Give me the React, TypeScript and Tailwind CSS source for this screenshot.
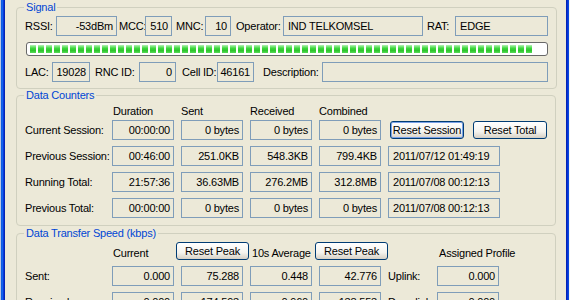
import type { ReactNode } from "react";

const SEGMENTS = Array.from({ length: 63 }, (_, i) => i);

function Box({
  w,
  children,
  align = "right",
}: {
  w: string;
  children?: ReactNode;
  align?: "left" | "right";
}) {
  return (
    <div
      className={`flex h-[20px] shrink-0 items-center border border-[#7F9DB9] bg-[#ECE9D8] ${w} ${
        align === "right" ? "justify-end pr-[3px]" : "justify-start pl-[4px]"
      }`}
    >
      {children}
    </div>
  );
}

function Label({ w, children, pl = "" }: { w: string; children: ReactNode; pl?: string }) {
  return <span className={`shrink-0 whitespace-nowrap ${w} ${pl}`}>{children}</span>;
}

function XpButton({ children, w, focused = false }: { children: ReactNode; w: string; focused?: boolean }) {
  return (
    <button
      type="button"
      className={`flex h-[18px] shrink-0 items-center justify-center rounded-[3px] border border-[#003C74] bg-[linear-gradient(to_bottom,#FFFFFF,#F4F3EE_60%,#D6D0C5)] text-[11px] leading-[13px] text-black ${w} ${
        focused ? "shadow-[inset_0_0_0_1px_#7BA2E7]" : ""
      }`}
    >
      {children}
    </button>
  );
}

function Group({ title, children, className = "" }: { title: string; children: ReactNode; className?: string }) {
  return (
    <fieldset className={`w-[540px] rounded-[4px] border border-[#D0D0BF] px-[8px] ${className}`}>
      <legend className="-ml-px px-[2px] leading-[13px] text-[#0046D5]">{title}</legend>
      {children}
    </fieldset>
  );
}

function SignalGroup() {
  return (
    <Group title="Signal" className="pb-[6px]">
      <div className="flex flex-col pt-[2px]">
        <div className="flex h-[20px] items-center">
          <Label w="w-[31px]">RSSI:</Label>
          <Box w="w-[61px]">-53dBm</Box>
          <Label w="w-[28px]" pl="pl-[2px]">MCC:</Label>
          <Box w="w-[27px]">510</Box>
          <Label w="w-[33px]" pl="pl-[4px]">MNC:</Label>
          <Box w="w-[26px]">10</Box>
          <Label w="w-[52px]" pl="pl-[5px]">Operator:</Label>
          <Box w="w-[140px]" align="left">IND TELKOMSEL</Box>
          <Label w="w-[32px]" pl="pl-[4px]">RAT:</Label>
          <Box w="w-[93px]" align="left">EDGE</Box>
        </div>

        <div className="ml-px mt-[6px] flex h-[14px] w-[522px] items-center gap-[2px] rounded-[3px] border border-[#686868] bg-white pl-[3px]">
          {SEGMENTS.map((i) => (
            <div
              key={i}
              className="h-[8px] w-[6px] shrink-0 bg-[linear-gradient(to_bottom,#B7F2B7,#3FD83F_40%,#2CC52C_70%,#5ADB5A)]"
            />
          ))}
        </div>

        <div className="mt-[6px] flex h-[20px] items-center">
          <Label w="w-[27px]">LAC:</Label>
          <Box w="w-[38px]">19028</Box>
          <Label w="w-[49px]" pl="pl-[5px]">RNC ID:</Label>
          <Box w="w-[37px]">0</Box>
          <Label w="w-[41px]" pl="pl-[6px]">Cell ID:</Label>
          <Box w="w-[37px]">46161</Box>
          <Label w="w-[68px]" pl="pl-[9px]">Description:</Label>
          <Box w="w-[226px]" />
        </div>
      </div>
    </Group>
  );
}

const counterRows = [
  { label: "Current Session:", values: ["00:00:00", "0 bytes", "0 bytes", "0 bytes"], buttons: true },
  { label: "Previous Session:", values: ["00:46:00", "251.0KB", "548.3KB", "799.4KB"], stamp: "2011/07/12 01:49:19" },
  { label: "Running Total:", values: ["21:57:36", "36.63MB", "276.2MB", "312.8MB"], stamp: "2011/07/08 00:12:13" },
  { label: "Previous Total:", values: ["00:00:00", "0 bytes", "0 bytes", "0 bytes"], stamp: "2011/07/08 00:12:13" },
];

function CountersGroup() {
  return (
    <Group title="Data Counters" className="pb-[7px]">
      <div className="flex h-[18px] items-center">
        <span className="w-[87px] shrink-0" />
        <span className="w-[69px] shrink-0 pl-px">Duration</span>
        <span className="w-[69px] shrink-0">Sent</span>
        <span className="w-[69px] shrink-0">Received</span>
        <span className="w-[62px] shrink-0">Combined</span>
      </div>
      <div className="flex flex-col gap-[6px]">
        {counterRows.map((r) => (
          <div key={r.label} className="flex h-[20px] items-center">
            <Label w="w-[87px]">{r.label}</Label>
            <div className="flex gap-[7px]">
              {r.values.map((v, i) => (
                <Box key={i} w="w-[62px]">
                  {v}
                </Box>
              ))}
            </div>
            {r.buttons ? (
              <div className="ml-[9px] flex gap-[9px]">
                <XpButton w="w-[74px]" focused>
                  Reset Session
                </XpButton>
                <XpButton w="w-[74px]">Reset Total</XpButton>
              </div>
            ) : (
              <div className="ml-[7px]">
                <Box w="w-[112px]" align="left">
                  {r.stamp}
                </Box>
              </div>
            )}
          </div>
        ))}
      </div>
    </Group>
  );
}

const speedRows = [
  { label: "Sent:", values: ["0.000", "75.288", "0.448", "42.776"], side: "Uplink:", profile: "0.000" },
  { label: "Received:", values: ["0.000", "174.593", "0.960", "138.553"], side: "Downlink:", profile: "0.000" },
];

function SpeedGroup() {
  return (
    <Group title="Data Transfer Speed (kbps)" className="mt-px pb-[6px]">
      <div className="flex h-[20px] items-end">
        <span className="w-[87px] shrink-0" />
        <span className="w-[64px] shrink-0 pl-px">Current</span>
        <div className="mb-[1px] self-start pt-[2px]">
          <XpButton w="w-[73px]">Reset Peak</XpButton>
        </div>
        <span className="w-[66px] shrink-0 pl-[3px]">10s Average</span>
        <div className="mb-[1px] self-start pt-[2px]">
          <XpButton w="w-[73px]">Reset Peak</XpButton>
        </div>
        <span className="shrink-0 pl-[51px]">Assigned Profile</span>
      </div>
      <div className="mt-[6px] flex flex-col gap-[6px]">
        {speedRows.map((r) => (
          <div key={r.label} className="flex h-[20px] items-center">
            <Label w="w-[87px]">{r.label}</Label>
            <div className="flex gap-[7px]">
              {r.values.map((v, i) => (
                <Box key={i} w="w-[62px]">
                  {v}
                </Box>
              ))}
            </div>
            <Label w="w-[56px]" pl="pl-[7px]">{r.side}</Label>
            <Box w="w-[62px]">{r.profile}</Box>
          </div>
        ))}
      </div>
    </Group>
  );
}

export default function App() {
  return (
    <div className="flex h-[300px] w-[570px] overflow-hidden bg-[#ECE9D8] font-['Liberation_Sans',Arial,sans-serif] text-[11px] leading-[13px] tracking-[-0.2px] text-black">
      <div className="flex w-[5px] shrink-0">
        <div className="w-[1px] bg-[#B9C6E4]" />
        <div className="w-[4px] bg-[linear-gradient(to_right,#0855DD,#166AEE,#0831D9,#001EA0)]" />
      </div>
      <main className="flex w-[561px] shrink-0 flex-col pl-[11px] pt-px">
        <SignalGroup />
        <CountersGroup />
        <SpeedGroup />
      </main>
      <div className="flex w-[4px] shrink-0">
        <div className="w-[3px] bg-[linear-gradient(to_right,#001EA0,#0831D9,#0855DD)]" />
        <div className="w-[1px] bg-[#F4F4F4]" />
      </div>
    </div>
  );
}
